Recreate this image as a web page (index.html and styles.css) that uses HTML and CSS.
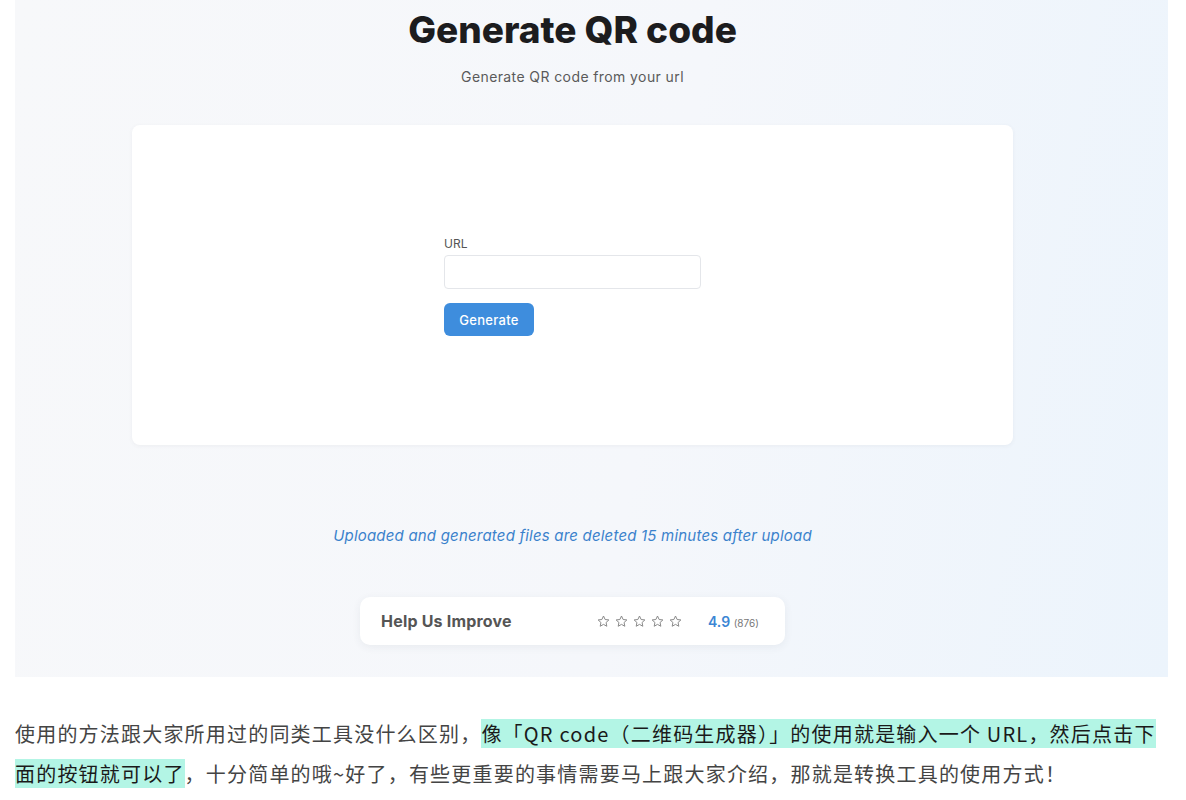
FILE: index.html
```html
<!DOCTYPE html>
<html lang="zh-CN">
<head>
<meta charset="UTF-8" />
<meta name="viewport" content="width=device-width, initial-scale=1" />
<title>Generate QR code</title>
<link rel="stylesheet" href="styles.css">
</head>

<body>

<div class="shot">
  <h1 class="title">Generate QR code</h1>
  <p class="subtitle">Generate QR code from your url</p>

  <div class="card">
    <form class="form" onsubmit="return false">
      <label class="label" for="url">URL</label>
      <input class="input" id="url" type="text" />
      <button class="btn" type="submit">Generate</button>
    </form>
  </div>

  <p class="note">Uploaded and generated files are deleted 15 minutes after upload</p>

  <div class="rating">
    <span class="rating-title">Help Us Improve</span>
    <span class="stars">
      <svg viewBox="0 0 24 24"><path d="M12 3.2l2.6 5.6 6 .7-4.5 4.1 1.2 6-5.3-3-5.3 3 1.2-6-4.5-4.1 6-.7z"/></svg>
      <svg viewBox="0 0 24 24"><path d="M12 3.2l2.6 5.6 6 .7-4.5 4.1 1.2 6-5.3-3-5.3 3 1.2-6-4.5-4.1 6-.7z"/></svg>
      <svg viewBox="0 0 24 24"><path d="M12 3.2l2.6 5.6 6 .7-4.5 4.1 1.2 6-5.3-3-5.3 3 1.2-6-4.5-4.1 6-.7z"/></svg>
      <svg viewBox="0 0 24 24"><path d="M12 3.2l2.6 5.6 6 .7-4.5 4.1 1.2 6-5.3-3-5.3 3 1.2-6-4.5-4.1 6-.7z"/></svg>
      <svg viewBox="0 0 24 24"><path d="M12 3.2l2.6 5.6 6 .7-4.5 4.1 1.2 6-5.3-3-5.3 3 1.2-6-4.5-4.1 6-.7z"/></svg>
    </span>
    <span class="score">4.9 <small>(876)</small></span>
  </div>
</div>

<p class="article">使用的方法跟大家所用过的同类工具没什么区别，<mark>像「QR code（二维码生成器）」的使用就是输入一个 URL，然后点击下<br>面的按钮就可以了</mark>，十分简单的哦~好了，有些更重要的事情需要马上跟大家介绍，那就是转换工具的使用方式！</p>

</body>
</html>
```

FILE: styles.css
```css
body {
  margin: 0;
  background: #fff;
  font-family: Inter, "Open Sans", sans-serif;
}
.shot {
  margin-left: 15px;
  width: 1153px;
  height: 677px;
  box-sizing: border-box;
  padding-right: 38px;
  background: linear-gradient(100deg, #f7f8fa 0%, #f5f7fb 55%, #ecf4fc 100%);
  display: flex;
  flex-direction: column;
  align-items: center;
}
.title {
  margin: 9px 0 0;
  font-size: 37px;
  line-height: 42px;
  font-weight: 800;
  color: #1c1c1e;
}
.subtitle {
  margin: 17px 0 0;
  font-size: 14px;
  letter-spacing: 0.4px;
  color: #5a5a5a;
}
.card {
  margin-top: 40px;
  width: 881px;
  height: 320px;
  background: #fff;
  border-radius: 8px;
  box-shadow: 0 1px 4px rgba(60, 70, 90, 0.06);
  display: flex;
  align-items: center;
  justify-content: center;
}
.form {
  width: 257px;
  margin-top: 2px;
  display: flex;
  flex-direction: column;
  align-items: flex-start;
}
.label {
  font-size: 12px;
  color: #555;
  margin-bottom: 4px;
}
.input {
  width: 100%;
  height: 34px;
  box-sizing: border-box;
  border: 1px solid #e4e6ea;
  border-radius: 4px;
  margin: 0;
}
.btn {
  margin-top: 14px;
  width: 90px;
  height: 33px;
  background: #3e8ddd;
  color: #fff;
  border: none;
  border-radius: 6px;
  font-family: inherit;
  font-size: 13px;
  font-weight: 500;
  letter-spacing: 0.3px;
  cursor: pointer;
}
.note {
  margin: 81px 0 0;
  font-size: 15px;
  letter-spacing: 0.2px;
  font-style: italic;
  color: #3b82cc;
}
.rating {
  margin-top: 52px;
  width: 425px;
  height: 48px;
  box-sizing: border-box;
  padding: 0 21px;
  background: #fff;
  border-radius: 10px;
  box-shadow: 0 2px 8px rgba(60, 70, 90, 0.07);
  display: flex;
  align-items: center;
}
.rating-title {
  font-size: 16px;
  letter-spacing: 0.2px;
  font-weight: 700;
  color: #555;
  width: 215px;
}
.stars {
  display: flex;
  gap: 3px;
}
.stars svg {
  width: 15px;
  height: 15px;
  fill: none;
  stroke: #8a8a8a;
  stroke-width: 1.6;
  stroke-linejoin: round;
}
.score {
  margin-left: 25px;
  font-size: 14px;
  font-weight: 600;
  color: #3b86d4;
}
.score small {
  font-size: 10px;
  font-weight: 400;
  color: #777;
}
.article {
  margin: 37px 0 0 15px;
  font-family: "Noto Sans CJK SC", sans-serif;
  font-size: 20px;
  line-height: 40px;
  color: #444;
  letter-spacing: 1.2px;
}
.article mark {
  background: #b3f5e5;
  color: #1a1a1a;
}
```
